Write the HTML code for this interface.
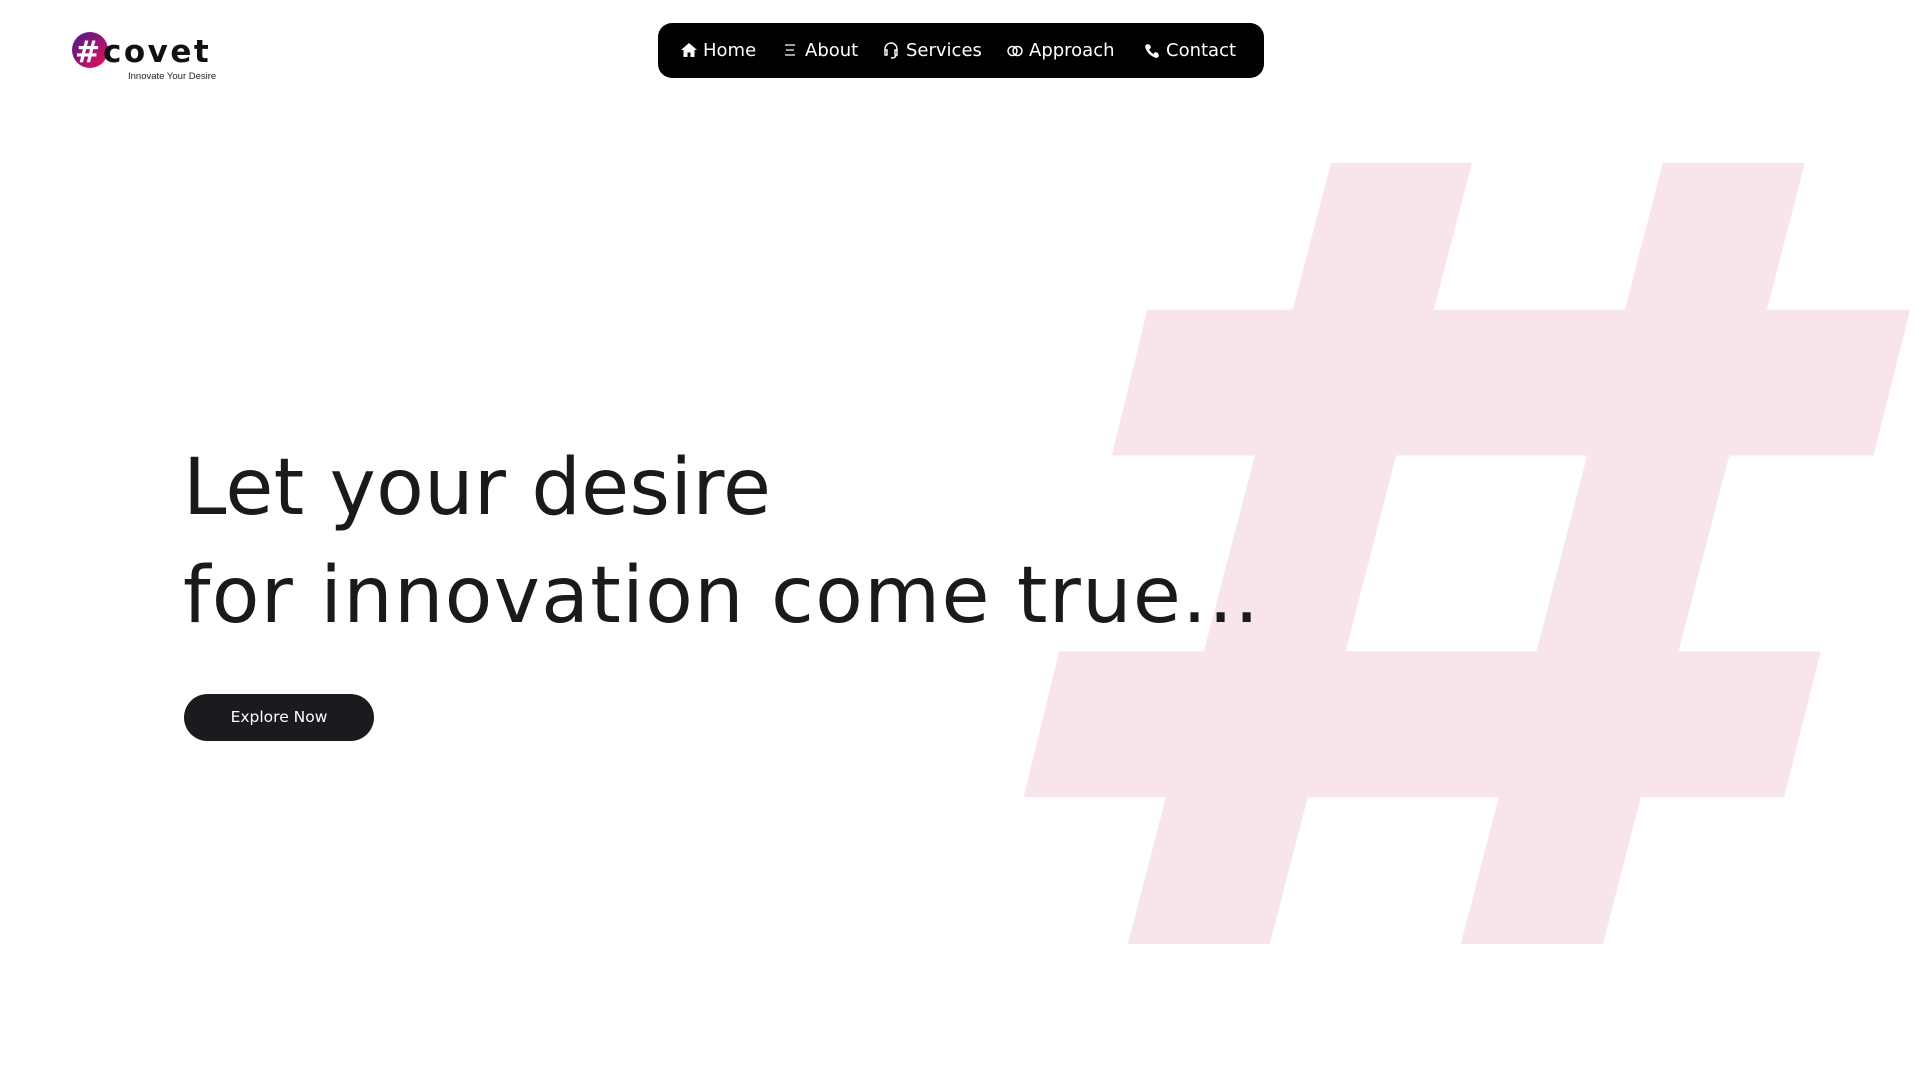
<!DOCTYPE html>
<html><head><meta charset="utf-8"><style>
html,body{margin:0;padding:0;background:#fff;width:1920px;height:1080px;overflow:hidden;position:relative;font-family:"DejaVu Sans","Liberation Sans",sans-serif}
.bg{position:absolute;left:0;top:0}
.nav{position:absolute;left:658px;top:23px;width:606px;height:55px;background:#000;border-radius:14px}
.it{position:absolute;top:0;height:55px;color:#fff;font-size:18px;line-height:55px;white-space:nowrap}
.it svg{position:absolute;top:19px}
.h{position:absolute;left:183px;color:#1a1a1a;font-size:78px;white-space:nowrap;line-height:1}
.btn{position:absolute;left:184px;top:694px;width:190px;height:47px;border-radius:24px;background:#1b1a1f;color:#fff;font-size:15.5px;text-align:center;line-height:47px}
</style></head><body>
<svg class="bg" width="1920" height="1080" viewBox="0 0 1568 882">
<g fill="#f8e4ec">
<polygon points="1087,133 1202,133 1037,771 921,771"/>
<polygon points="1358,133 1474,133 1309,771 1193,771"/>
<polygon points="937,253 1560,253 1530,372 908,372"/>
<polygon points="865,532 1487,532 1457,651 836,651"/>
</g></svg>

<svg style="position:absolute;left:0;top:0" width="240" height="90">
<defs><linearGradient id="g" x1="0" y1="0" x2="1" y2="1"><stop offset="0" stop-color="#4a1a8c"/><stop offset="1" stop-color="#e8105a"/></linearGradient></defs>
<circle cx="90" cy="50" r="18" fill="url(#g)"/>
<text x="75" y="62" font-family="DejaVu Sans" font-weight="bold" font-size="30" fill="#fff">#</text>
<text x="103" y="62" font-family="DejaVu Sans" font-weight="bold" font-size="31" letter-spacing="2.5" fill="#111">covet</text>
<text x="128" y="79" font-family="Liberation Sans" font-size="9.5" fill="#222">Innovate Your Desire</text>
</svg>

<div class="nav">
<div class="it" style="left:22px"><svg width="18" height="16" viewBox="0 0 18 16"><path d="M9 1L1 8h2.5v7h4v-4.5h3V15h4V8H17z" fill="#fff"/></svg><span style="margin-left:23px">Home</span></div>
<div class="it" style="left:125px"><svg width="14" height="16" viewBox="0 0 14 16"><path d="M2 3h10M3 8h8M2 13h10" stroke="#fff" stroke-width="1.3"/></svg><span style="margin-left:22px">About</span></div>
<div class="it" style="left:224px"><svg width="18" height="20" viewBox="0 0 18 20" style="top:17px"><path d="M3 12V9a6 6 0 0 1 12 0v3M3 10h2v5H3zM13 10h2v5h-2zM14 15c0 2-2 3-5 3" fill="none" stroke="#fff" stroke-width="1.4"/></svg><span style="margin-left:24px">Services</span></div>
<div class="it" style="left:348px"><svg width="18" height="14" viewBox="0 0 18 14" style="top:21px"><circle cx="6.5" cy="7" r="4.5" fill="none" stroke="#fff" stroke-width="1.5"/><circle cx="11.5" cy="7" r="4.5" fill="none" stroke="#fff" stroke-width="1.5"/></svg><span style="margin-left:23px">Approach</span></div>
<div class="it" style="left:486px"><svg width="16" height="16" viewBox="0 0 16 16" style="top:20px"><path d="M3 1l3 1 1 3-2 1.5c1 2 2.5 3.5 4.5 4.5L11 9l3 1 1 3-2 2C7 14 2 9 1 3z" fill="#fff"/></svg><span style="margin-left:22px">Contact</span></div>
</div>

<div class="h" style="top:449px;letter-spacing:0.3px">Let your desire</div>
<div class="h" style="top:557px;letter-spacing:1.3px">for innovation come true...</div>
<div class="btn">Explore Now</div>
</body></html>
